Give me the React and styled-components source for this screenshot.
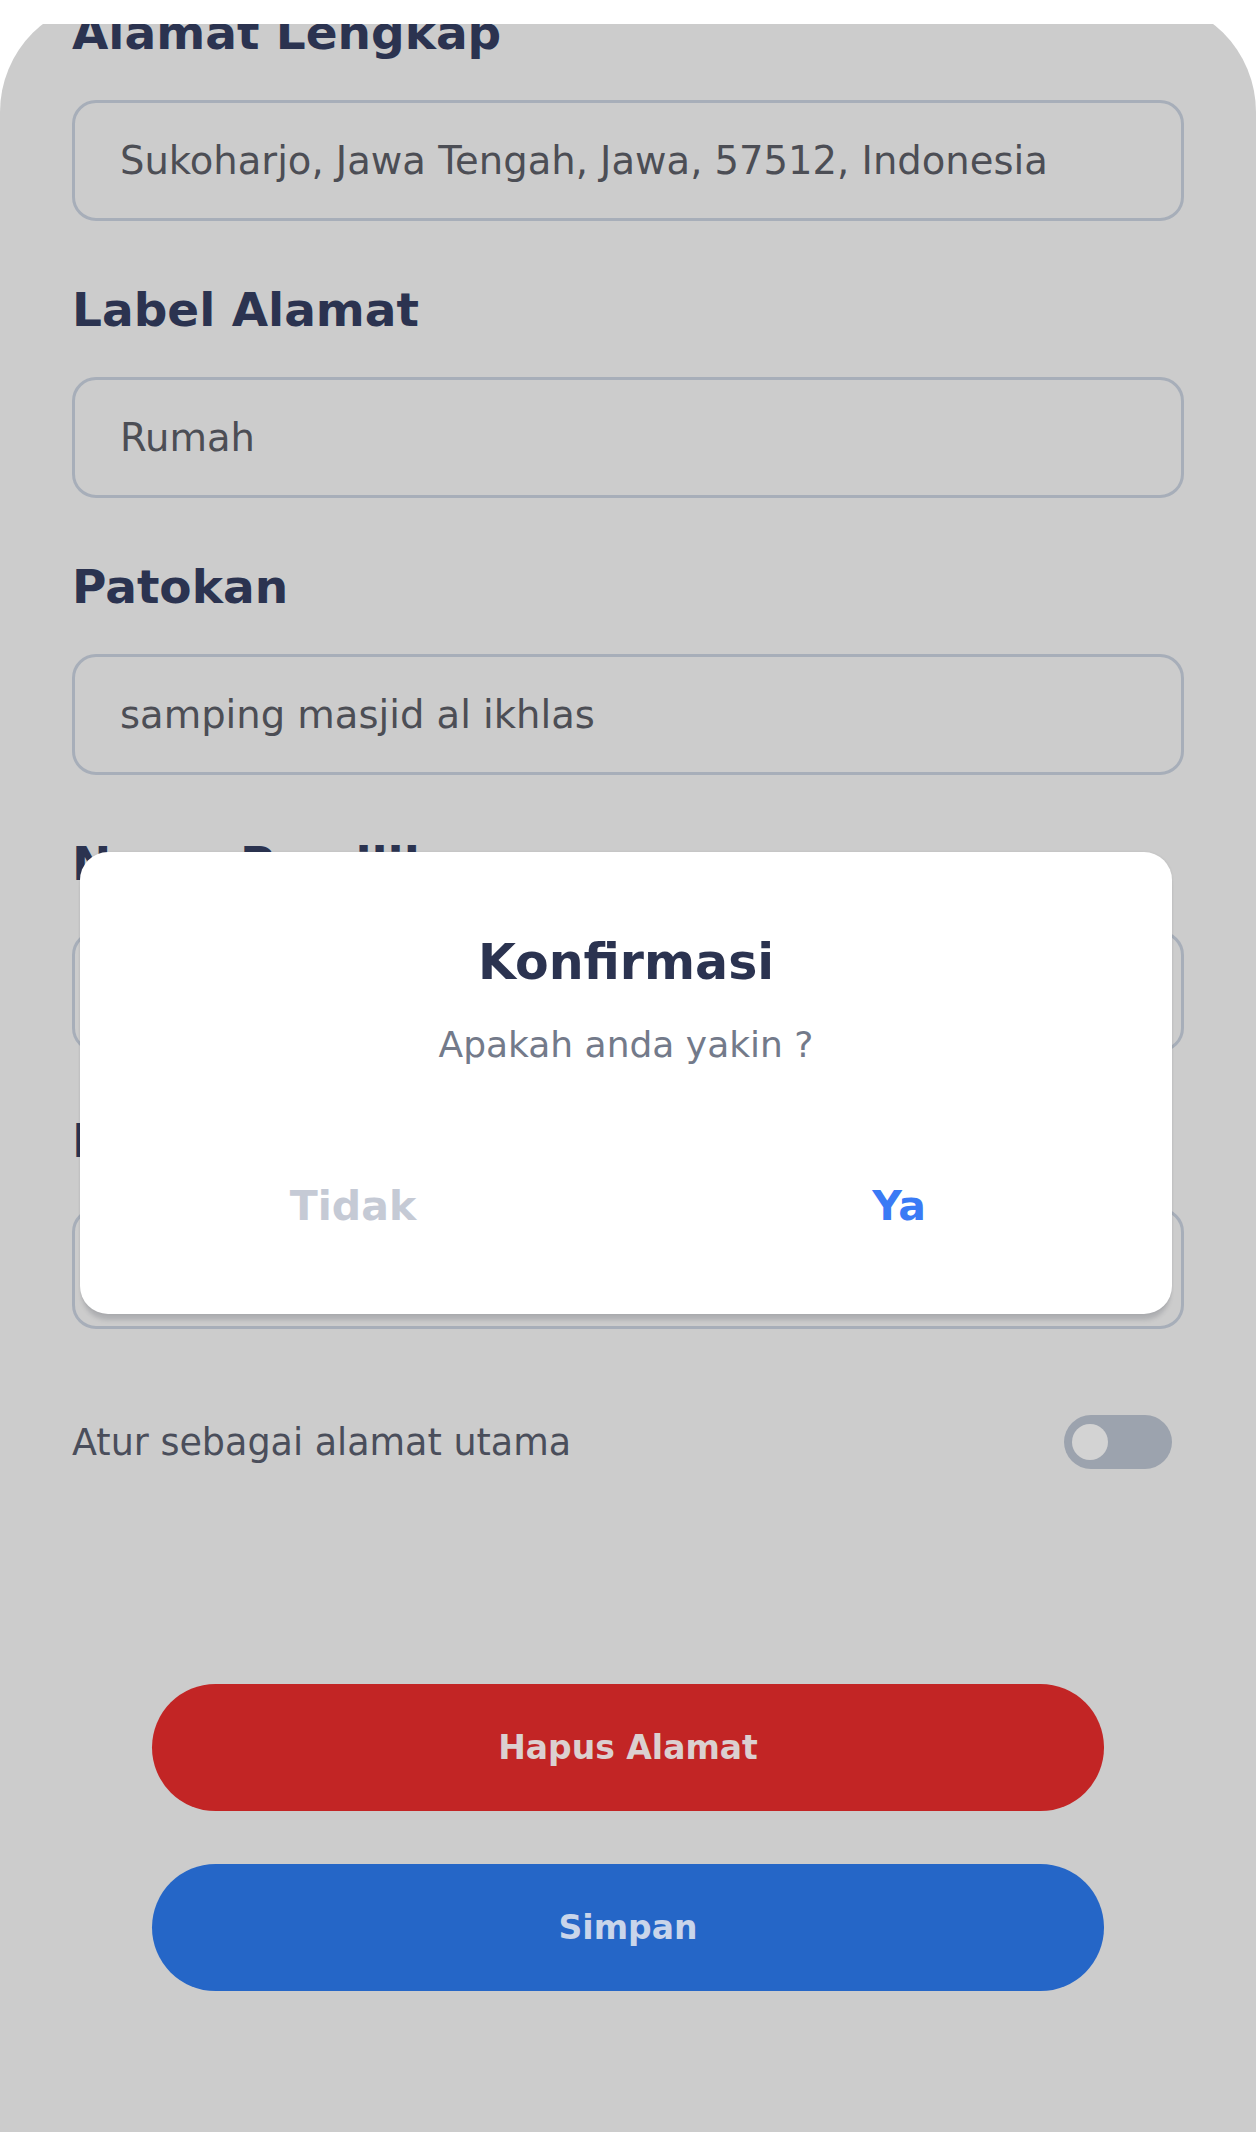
import React from 'react';
import styled, { createGlobalStyle } from 'styled-components';

// warna utama
const ink = '#2b3350';
const sheetGrey = '#cccccc';

const GlobalStyle = createGlobalStyle`
  html, body {
    margin: 0;
    padding: 0;
    background: #ffffff;
  }
  body {
    font-family: "DejaVu Sans", "Liberation Sans", sans-serif;
  }
  * {
    box-sizing: border-box;
  }
`;

const Screen = styled.div`
  position: relative;
  width: 1256px;
  height: 2132px;
  overflow: hidden;
  background: #ffffff;
`;

const TopStrip = styled.div`
  position: absolute;
  top: 0;
  left: 0;
  right: 0;
  height: 24px;
  background: #ffffff;
  z-index: 3;
`;

const Sheet = styled.div`
  height: 100%;
  background: ${sheetGrey};
  border-radius: 112px 112px 0 0;
  overflow: hidden;
  padding: 10px 72px 0;
  display: flex;
  flex-direction: column;
`;

const Form = styled.div`
  display: flex;
  flex-direction: column;
  gap: 66px;
`;

const Field = styled.div`
  display: flex;
  flex-direction: column;
  gap: 44px;
`;

const Label = styled.label`
  font-size: 47px;
  line-height: 46px;
  font-weight: 700;
  color: ${ink};
`;

const Input = styled.div`
  height: 121px;
  border: 3px solid #a7aeb9;
  border-radius: 24px;
  padding: 0 45px;
  display: flex;
  align-items: center;
  font-size: 38.5px;
  color: #4c4e55;
  white-space: nowrap;
`;

const ToggleRow = styled.div`
  margin-top: 87px;
  height: 52px;
  padding-right: 12px;
  display: flex;
  align-items: center;
  justify-content: space-between;
`;

const ToggleText = styled.span`
  font-size: 36.5px;
  color: #4a4e5b;
`;

const Switch = styled.div`
  width: 108px;
  height: 54px;
  border-radius: 27px;
  background: #9ca3ae;
  padding: 0 8px;
  display: flex;
  align-items: center;
  justify-content: ${(p) => (p.on ? 'flex-end' : 'flex-start')};
`;

const Knob = styled.div`
  width: 36px;
  height: 36px;
  border-radius: 50%;
  background: #d3d3d3;
`;

const Actions = styled.div`
  margin-top: 216px;
  padding: 0 80px;
  display: flex;
  flex-direction: column;
  gap: 53px;
`;

const ActionButton = styled.button`
  height: 127px;
  border: none;
  border-radius: 64px;
  background: ${(p) => (p.danger ? '#c22525' : '#2566c7')};
  color: ${(p) => (p.danger ? '#dbd0d0' : '#c9d5ea')};
  font-family: inherit;
  font-size: 33px;
  font-weight: 700;
`;

const Dialog = styled.div`
  position: absolute;
  left: 80px;
  top: 852px;
  width: 1092px;
  height: 462px;
  background: #ffffff;
  border-radius: 28px;
  box-shadow: 0 8px 4px -2px rgba(60, 66, 80, 0.2), 0 0 3px rgba(0, 0, 0, 0.08);
  padding-top: 87px;
  display: flex;
  flex-direction: column;
  align-items: center;
  z-index: 2;
`;

const DialogTitle = styled.h2`
  margin: 0;
  font-size: 49px;
  line-height: 48px;
  font-weight: 700;
  color: ${ink};
`;

const DialogText = styled.p`
  margin: 41px 0 0;
  font-size: 36px;
  line-height: 34px;
  color: #737a8a;
`;

const DialogButtons = styled.div`
  margin-top: 124px;
  width: 100%;
  display: flex;
`;

const DialogButton = styled.button`
  flex: 1;
  border: none;
  background: none;
  padding: 0;
  font-family: inherit;
  font-size: 41px;
  line-height: 41px;
  font-weight: 700;
  color: ${(p) => (p.primary ? '#3a7af5' : '#c5cad5')};
`;

const fields = [
  { label: 'Alamat Lengkap', value: 'Sukoharjo, Jawa Tengah, Jawa, 57512, Indonesia' },
  { label: 'Label Alamat', value: 'Rumah' },
  { label: 'Patokan', value: 'samping masjid al ikhlas' },
  { label: 'Nama Pemilik', value: 'Budi Santoso' },
  { label: 'Nomor Telepon', value: '081234567890' },
];

export default function App() {
  return (
    <Screen>
      <GlobalStyle />
      <TopStrip />
      <Sheet>
        <Form>
          {fields.map((f) => (
            <Field key={f.label}>
              <Label>{f.label}</Label>
              <Input>{f.value}</Input>
            </Field>
          ))}
        </Form>
        <ToggleRow>
          <ToggleText>Atur sebagai alamat utama</ToggleText>
          <Switch>
            <Knob />
          </Switch>
        </ToggleRow>
        <Actions>
          <ActionButton danger>Hapus Alamat</ActionButton>
          <ActionButton>Simpan</ActionButton>
        </Actions>
      </Sheet>
      <Dialog>
        <DialogTitle>Konfirmasi</DialogTitle>
        <DialogText>Apakah anda yakin ?</DialogText>
        <DialogButtons>
          <DialogButton>Tidak</DialogButton>
          <DialogButton primary>Ya</DialogButton>
        </DialogButtons>
      </Dialog>
    </Screen>
  );
}
